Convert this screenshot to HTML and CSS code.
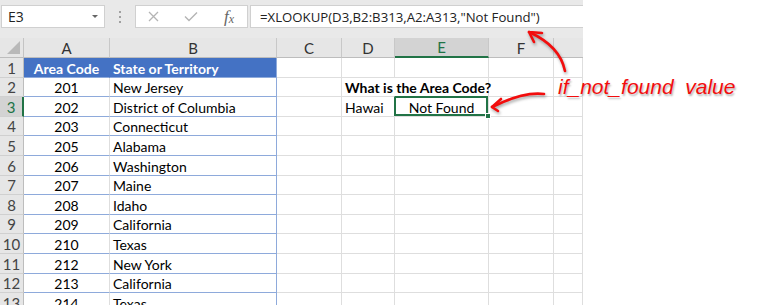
FILE: index.html
```html
<!DOCTYPE html>
<html>
<head>
<meta charset="utf-8">
<title>XLOOKUP if_not_found</title>
<link rel="stylesheet" href="styles.css">
</head>
<body>
<div class="page">
  <div class="excel">
    <div class="toolbar">
      <div class="namebox"><span>E3</span><span class="dd"></span></div>
      <div class="grip"><i></i><i></i><i></i></div>
      <div class="fxbox">
        <svg class="ico-x" width="11" height="11" viewBox="0 0 11 11"><path d="M1 1 L10 10 M10 1 L1 10" stroke="#b4b4b4" stroke-width="1.3" fill="none"/></svg>
        <svg class="ico-ok" width="14" height="11" viewBox="0 0 14 11"><path d="M1 5.5 L5 9.5 L13 1.5" stroke="#b4b4b4" stroke-width="1.4" fill="none"/></svg>
        <span class="fx">f<sub>x</sub></span>
      </div>
      <div class="formula">=XLOOKUP(D3,B2:B313,A2:A313,"Not Found")</div>
    </div>

    <div class="sheet">
      <!-- header -->
      <div class="corner"><span class="tri"></span></div>
      <div class="ch">A</div><div class="ch">B</div><div class="ch">C</div><div class="ch">D</div><div class="ch sel">E</div><div class="ch">F</div><div class="ch last"></div>
      <!-- 1 -->
      <div class="rh">1</div>
      <div class="c th num">Area Code</div><div class="c th thb">State or Territory</div>
      <div class="c"></div><div class="c"></div><div class="c"></div><div class="c"></div><div class="c"></div>
      <!-- 2 -->
      <div class="rh">2</div>
      <div class="c tb num">201</div><div class="c tb tbb">New Jersey</div>
      <div class="c"></div><div class="c bold over">What is the Area Code?</div><div class="c"></div><div class="c"></div><div class="c"></div>
      <!-- 3 -->
      <div class="rh rsel">3</div>
      <div class="c tb num">202</div><div class="c tb tbb">District of Columbia</div>
      <div class="c"></div><div class="c">Hawai</div><div class="c num active">Not Found<span class="handle"></span></div><div class="c"></div><div class="c"></div>
      <!-- 4 -->
      <div class="rh">4</div>
      <div class="c tb num">203</div><div class="c tb tbb">Connecticut</div>
      <div class="c"></div><div class="c"></div><div class="c"></div><div class="c"></div><div class="c"></div>
      <!-- 5 -->
      <div class="rh">5</div>
      <div class="c tb num">205</div><div class="c tb tbb">Alabama</div>
      <div class="c"></div><div class="c"></div><div class="c"></div><div class="c"></div><div class="c"></div>
      <!-- 6 -->
      <div class="rh">6</div>
      <div class="c tb num">206</div><div class="c tb tbb">Washington</div>
      <div class="c"></div><div class="c"></div><div class="c"></div><div class="c"></div><div class="c"></div>
      <!-- 7 -->
      <div class="rh">7</div>
      <div class="c tb num">207</div><div class="c tb tbb">Maine</div>
      <div class="c"></div><div class="c"></div><div class="c"></div><div class="c"></div><div class="c"></div>
      <!-- 8 -->
      <div class="rh">8</div>
      <div class="c tb num">208</div><div class="c tb tbb">Idaho</div>
      <div class="c"></div><div class="c"></div><div class="c"></div><div class="c"></div><div class="c"></div>
      <!-- 9 -->
      <div class="rh">9</div>
      <div class="c tb num">209</div><div class="c tb tbb">California</div>
      <div class="c"></div><div class="c"></div><div class="c"></div><div class="c"></div><div class="c"></div>
      <!-- 10 -->
      <div class="rh">10</div>
      <div class="c tb num">210</div><div class="c tb tbb">Texas</div>
      <div class="c"></div><div class="c"></div><div class="c"></div><div class="c"></div><div class="c"></div>
      <!-- 11 -->
      <div class="rh">11</div>
      <div class="c tb num">212</div><div class="c tb tbb">New York</div>
      <div class="c"></div><div class="c"></div><div class="c"></div><div class="c"></div><div class="c"></div>
      <!-- 12 -->
      <div class="rh">12</div>
      <div class="c tb num">213</div><div class="c tb tbb">California</div>
      <div class="c"></div><div class="c"></div><div class="c"></div><div class="c"></div><div class="c"></div>
      <!-- 13 -->
      <div class="rh">13</div>
      <div class="c tb num">214</div><div class="c tb tbb">Texas</div>
      <div class="c"></div><div class="c"></div><div class="c"></div><div class="c"></div><div class="c"></div>
    </div>
  </div>

  <svg class="arrows" width="768" height="305" viewBox="0 0 768 305">
    <g stroke="#f20d0d" stroke-width="2.6" fill="none" stroke-linecap="round" stroke-linejoin="round">
      <path d="M565 71 C562 56 551 42 529 32"/>
      <path d="M529 32 L542 33 M529 32 L534 42"/>
      <path d="M544 94 C528 92 510 98 492 107"/>
      <path d="M492 107 L501 99 M492 107 L498 111"/>
    </g>
  </svg>
  <div class="note">if_not_found&nbsp; value</div>
</div>
</body>
</html>
```

FILE: styles.css
```css
* { box-sizing: border-box; margin: 0; padding: 0; }

body {
  margin: 0;
  background: #fff;
  font-family: Lato, "Liberation Sans", sans-serif;
}

.page {
  position: relative;
  width: 768px;
  height: 305px;
  overflow: hidden;
  background: #fff;
}

.excel { width: 583px; }

/* ---------- formula bar ---------- */
.toolbar {
  height: 38px;
  background: #e9e9e9;
  display: flex;
  align-items: flex-start;
  padding: 5px 0 0 1px;
}

.namebox {
  width: 104px;
  height: 23px;
  background: #fff;
  border: 1px solid #d0d0d0;
  display: flex;
  align-items: center;
  justify-content: space-between;
  padding: 0 6px 0 6px;
  font-family: "Open Sans", sans-serif;
  font-size: 14px;
  color: #222;
}

.dd {
  width: 0;
  height: 0;
  border-left: 3px solid transparent;
  border-right: 3px solid transparent;
  border-top: 3px solid #666;
}

.grip {
  width: 30px;
  height: 23px;
  display: flex;
  flex-direction: column;
  align-items: center;
  justify-content: center;
  gap: 3px;
}
.grip i { display: block; width: 2px; height: 2px; background: #a0a0a0; }

.fxbox {
  width: 113px;
  height: 23px;
  background: #fff;
  border: 1px solid #d0d0d0;
  display: flex;
  align-items: center;
  padding-left: 12px;
}
.ico-ok { margin-left: 25px; }
.fx {
  margin-left: 26px;
  font-family: "Liberation Serif", serif;
  font-style: italic;
  font-size: 17px;
  color: #666;
  line-height: 1;
}
.fx sub { font-size: 12px; vertical-align: -1px; }

.formula {
  flex: 1;
  height: 23px;
  margin-left: 2px;
  background: #fff;
  border: 1px solid #d0d0d0;
  border-right: none;
  display: flex;
  align-items: center;
  padding-left: 9px;
  font-family: "Open Sans", sans-serif;
  font-size: 13.2px;
  color: #222;
  white-space: nowrap;
}

/* ---------- grid ---------- */
.sheet {
  display: grid;
  grid-template-columns: 24px 86px 167px 65px 53px 94px 65px 29px;
  grid-template-rows: 20px 20px 19px 20px 19px 20px 20px 19px 20px 19px 20px 20px 19px 20px;
  font-size: 14px;
  color: #000;
}

.corner {
  position: relative;
  background: #e6e6e6;
  border-right: 1px solid #c4c4c4;
  border-bottom: 1px solid #bdbdbd;
}
.tri {
  position: absolute;
  right: 3px;
  bottom: 3px;
  width: 0;
  height: 0;
  border-left: 13px solid transparent;
  border-bottom: 13px solid #b9b9b9;
}

.ch {
  background: #e6e6e6;
  border-right: 1px solid #c8c8c8;
  border-bottom: 1px solid #bdbdbd;
  display: flex;
  align-items: center;
  justify-content: center;
  color: #333;
  font-size: 15px;
}
.ch.sel {
  background: #d3d3d3;
  color: #217346;
  border-bottom: 2px solid #217346;
}
.ch.last { border-right: none; }

.rh {
  background: #e6e6e6;
  border-right: 1px solid #bdbdbd;
  border-bottom: 1px solid #d0d0d0;
  display: flex;
  align-items: center;
  justify-content: center;
  color: #444;
  font-size: 15px;
}
.rh.rsel {
  background: #d3d3d3;
  color: #217346;
  border-right: 2px solid #217346;
}

.c {
  position: relative;
  border-right: 1px solid #dedede;
  border-bottom: 1px solid #dedede;
  display: flex;
  align-items: center;
  padding: 1px 3px 0 3px;
  white-space: nowrap;
}
.num { justify-content: center; }

.th {
  background: #4472c4;
  color: #fff;
  font-weight: bold;
  border-right-color: #4472c4;
  border-bottom: 1px solid #8eaadb;
}
.tb { border-bottom: 1px solid #8eaadb; }
.tbb { border-right: 1px solid #8eaadb; }
.thb { border-right: 1px solid #8eaadb; }

.bold { font-weight: bold; }
.over { overflow: visible; border-right-color: transparent; z-index: 1; }

.active::after {
  content: "";
  position: absolute;
  left: -1px;
  top: -1px;
  right: 0;
  bottom: 0;
  border: 2px solid #217346;
}
.handle {
  position: absolute;
  right: -3px;
  bottom: -3px;
  width: 6px;
  height: 6px;
  background: #217346;
  border: 1px solid #fff;
  z-index: 2;
}

/* ---------- annotation overlay ---------- */
.arrows {
  position: absolute;
  left: 0;
  top: 0;
  pointer-events: none;
  filter: drop-shadow(1px 2px 1.5px rgba(0, 0, 0, 0.35));
}

.note {
  position: absolute;
  left: 558px;
  top: 76px;
  font-family: "Liberation Sans", sans-serif;
  font-style: italic;
  font-size: 21px;
  line-height: 1;
  color: #f20d0d;
  white-space: nowrap;
  text-shadow: 1px 2px 2px rgba(0, 0, 0, 0.3);
}
```
